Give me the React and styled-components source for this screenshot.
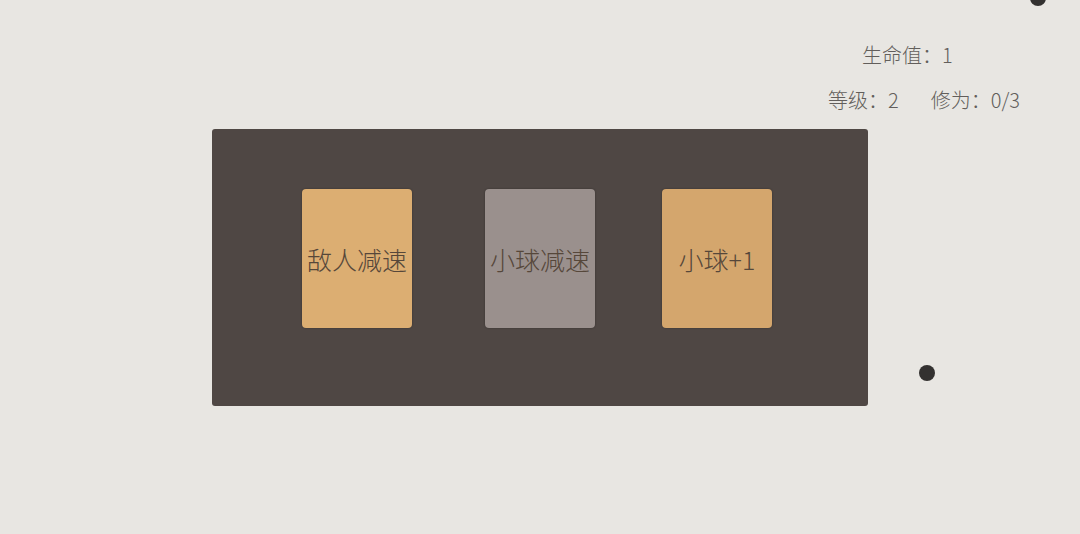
import React from "react";
import styled, { createGlobalStyle } from "styled-components";

const GlobalStyle = createGlobalStyle`
  html, body {
    margin: 0;
    padding: 0;
    background: #e8e6e2;
    font-family: "Noto Sans CJK SC", "Noto Sans", sans-serif;
  }
`;

const Stage = styled.div`
  position: relative;
  width: 1080px;
  height: 534px;
  overflow: hidden;
  background: #e8e6e2;
`;

const Stats = styled.div`
  display: flex;
  flex-direction: column;
  gap: 15px;
  height: 129px;
  padding: 40px 0 0 828px;
  box-sizing: border-box;
  color: #625e5b;
  font-size: 20px;
  font-weight: 300;
`;

const StatRow = styled.div`
  display: flex;
  gap: 32px;
  height: 30px;
  line-height: 30px;
  padding-left: ${(props) => props.$indent || 0}px;
`;

const Board = styled.div`
  display: flex;
  align-items: flex-start;
  margin-left: 212px;
  width: 656px;
  height: 277px;
  padding: 60px 0 0 90px;
  box-sizing: border-box;
  background: #4f4744;
  border-radius: 3px;
`;

const Card = styled.div`
  display: flex;
  justify-content: center;
  align-items: center;
  width: 110px;
  height: 139px;
  margin-right: ${(props) => props.$gap || 0}px;
  background: ${(props) => props.$color};
  border-radius: 4px;
  box-shadow: 0 0 2px rgba(0, 0, 0, 0.35);
  color: #56473a;
  font-size: 25px;
  font-weight: 300;
  white-space: nowrap;
`;

const Ball = styled.div`
  position: absolute;
  left: ${(props) => props.$x - 8}px;
  top: ${(props) => props.$y - 8}px;
  width: 16px;
  height: 16px;
  border-radius: 50%;
  background: #333130;
`;

const cards = [
  { label: "敌人减速", color: "#dcae72", gap: 73 },
  { label: "小球减速", color: "#9a908d", gap: 67 },
  { label: "小球+1", color: "#d4a66d", gap: 0 },
];

export default function App() {
  return (
    <Stage>
      <GlobalStyle />
      <Stats>
        <StatRow $indent={34}>
          <span>生命值：1</span>
        </StatRow>
        <StatRow>
          <span>等级：2</span>
          <span>修为：0/3</span>
        </StatRow>
      </Stats>
      <Board>
        {cards.map((card) => (
          <Card key={card.label} $color={card.color} $gap={card.gap}>
            {card.label}
          </Card>
        ))}
      </Board>
      <Ball $x={927} $y={373} />
      <Ball $x={1038} $y={-2} />
    </Stage>
  );
}
